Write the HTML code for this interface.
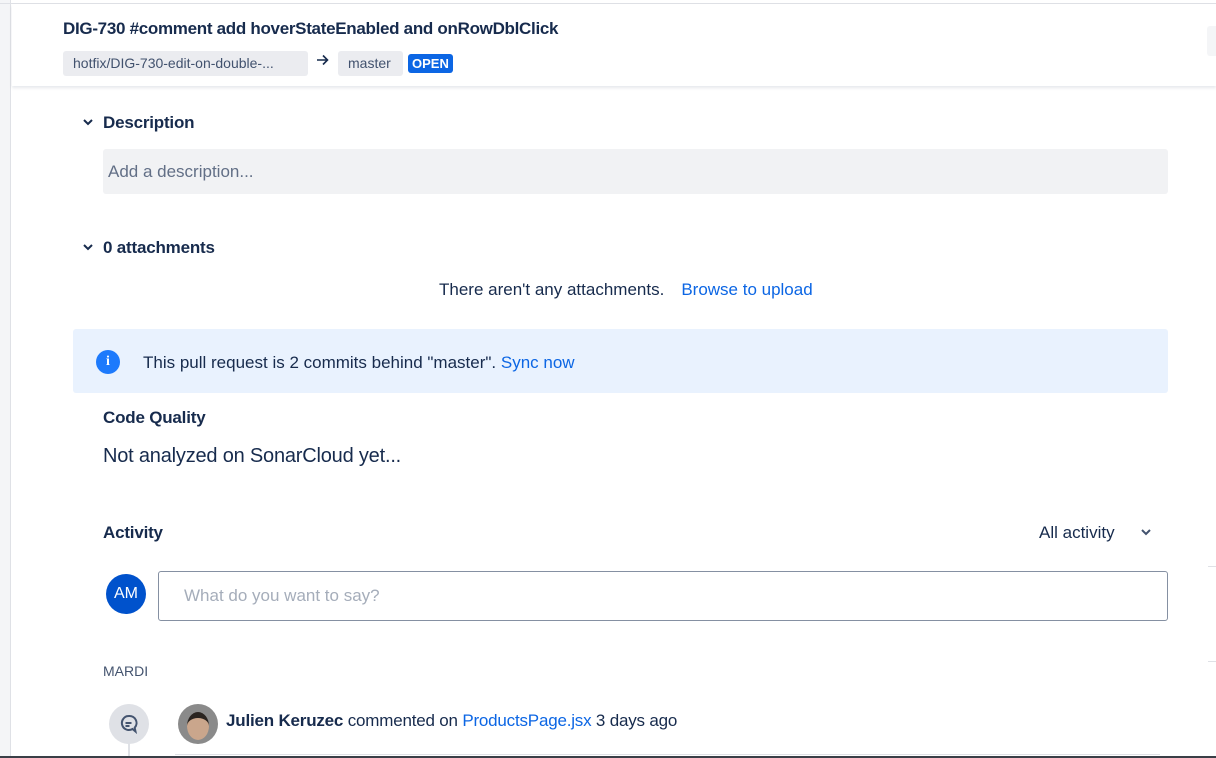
<!DOCTYPE html>
<html><head><meta charset="utf-8"><style>
*{box-sizing:border-box;margin:0;padding:0}
body{width:1216px;height:758px;overflow:hidden;background:#fff;font-family:"Liberation Sans",sans-serif;color:#172b4d;position:relative}
.abs{position:absolute}
.strip{left:0;top:0;width:11px;height:758px;background:#f4f5f7;border-right:1px solid #dfe1e6}
.topline{left:0;top:3px;width:1216px;height:1px;background:#dfe1e6}
.header{left:12px;top:4px;width:1204px;height:82px;background:#fff;box-shadow:0 2px 3px rgba(9,30,66,.1)}
.title{left:63px;top:19px;font-size:17px;font-weight:bold;letter-spacing:-.3px}
.chip{top:51px;height:25px;background:#ebecf0;border-radius:3px;font-size:14px;color:#42526e;line-height:25px;padding:0 10px}
.open{left:408px;top:54px;height:19px;background:#0c66e4;color:#fff;font-weight:bold;font-size:13px;line-height:19px;padding:0 4px;border-radius:3px}
.h{font-size:17px;font-weight:bold;letter-spacing:-.2px}
.link{color:#0c66e4}
</style></head><body>
<div class="abs strip"></div>
<div class="abs topline"></div>
<div class="abs header"></div>
<div class="abs" style="left:1207px;top:26px;width:9px;height:30px;background:#f4f5f7;border-radius:3px 0 0 3px"></div>
<div class="abs title">DIG-730 #comment add hoverStateEnabled and onRowDblClick</div>
<div class="abs chip" style="left:63px;width:245px">hotfix/DIG-730-edit-on-double-...</div>
<svg class="abs" style="left:316px;top:54px" width="14" height="12"><path d="M1 6h11M7 1.5l4.5 4.5L7 10.5" stroke="#172b4d" stroke-width="1.6" fill="none"/></svg>
<div class="abs chip" style="left:338px;width:65px">master</div>
<div class="abs open">OPEN</div>

<svg class="abs" style="left:82px;top:117px" width="12" height="10"><path d="M2 3l4 4 4-4" stroke="#172b4d" stroke-width="2" fill="none"/></svg>
<div class="abs h" style="left:103px;top:113px">Description</div>
<div class="abs" style="left:103px;top:149px;width:1065px;height:45px;background:#f1f2f4;border-radius:3px;font-size:17px;color:#626f86;line-height:46px;padding-left:5px">Add a description...</div>

<svg class="abs" style="left:82px;top:242px" width="12" height="10"><path d="M2 3l4 4 4-4" stroke="#172b4d" stroke-width="2" fill="none"/></svg>
<div class="abs h" style="left:103px;top:238px">0 attachments</div>
<div class="abs" style="left:439px;top:280px;font-size:17px">There aren't any attachments.<span class="link" style="margin-left:17px">Browse to upload</span></div>

<div class="abs" style="left:73px;top:329px;width:1095px;height:64px;background:#e9f2fe;border-radius:3px"></div>
<div class="abs" style="left:96px;top:350px;width:24px;height:24px;border-radius:50%;background:#1d7afc;color:#fff;font-weight:bold;font-size:14px;text-align:center;line-height:24px;font-family:'Liberation Serif',serif">i</div>
<div class="abs" style="left:143px;top:353px;font-size:17px">This pull request is 2 commits behind "master". <span class="link">Sync now</span></div>

<div class="abs h" style="left:103px;top:408px">Code Quality</div>
<div class="abs" style="left:103px;top:445px;font-size:20px;letter-spacing:-.2px">Not analyzed on SonarCloud yet...</div>

<div class="abs h" style="left:103px;top:523px">Activity</div>
<div class="abs" style="left:1039px;top:523px;font-size:17px">All activity</div>
<svg class="abs" style="left:1140px;top:527px" width="12" height="10"><path d="M2 3l4 4 4-4" stroke="#42526e" stroke-width="2" fill="none"/></svg>

<div class="abs" style="left:106px;top:574px;width:40px;height:40px;border-radius:50%;background:#0052cc;color:#fff;font-size:16px;text-align:center;line-height:40px">AM</div>
<div class="abs" style="left:158px;top:571px;width:1010px;height:50px;border:1px solid #8590a2;border-radius:3px;font-size:17px;color:#a5adba;line-height:48px;padding-left:25px">What do you want to say?</div>
<div class="abs" style="left:1208px;top:566px;width:8px;height:1px;background:#dfe1e6"></div>
<div class="abs" style="left:1208px;top:661px;width:8px;height:1px;background:#dfe1e6"></div>

<div class="abs" style="left:103px;top:663px;font-size:14px;color:#44546f">MARDI</div>
<div class="abs" style="left:128px;top:740px;width:2px;height:18px;background:#dfe1e6"></div>
<div class="abs" style="left:109px;top:704px;width:40px;height:40px;border-radius:50%;background:#dfe1e6"></div>
<svg class="abs" style="left:117px;top:712px" width="24" height="24"><path d="M12 4a7 7 0 1 0 3.5 13l3 2.5-.8-3.8A7 7 0 0 0 12 4z" fill="none" stroke="#44546f" stroke-width="2"/><path d="M8.5 11h6M8.5 14h4" stroke="#44546f" stroke-width="2"/></svg>
<div class="abs" style="left:178px;top:704px;width:40px;height:40px;border-radius:50%;background:#8a8a8a;overflow:hidden"><div style="position:absolute;left:9px;top:8px;width:22px;height:28px;border-radius:50%;background:#caa68c;border-top:6px solid #2a2420"></div></div>
<div class="abs" style="left:226px;top:711px;font-size:17px;letter-spacing:-.2px"><b>Julien Keruzec</b> commented on <span class="link">ProductsPage.jsx</span> 3 days ago</div>
<div class="abs" style="left:175px;top:754px;width:985px;height:1px;background:#dfe1e6"></div>
<div class="abs" style="left:0;top:756px;width:1216px;height:2px;background:#3a3f47"></div>
</body></html>
